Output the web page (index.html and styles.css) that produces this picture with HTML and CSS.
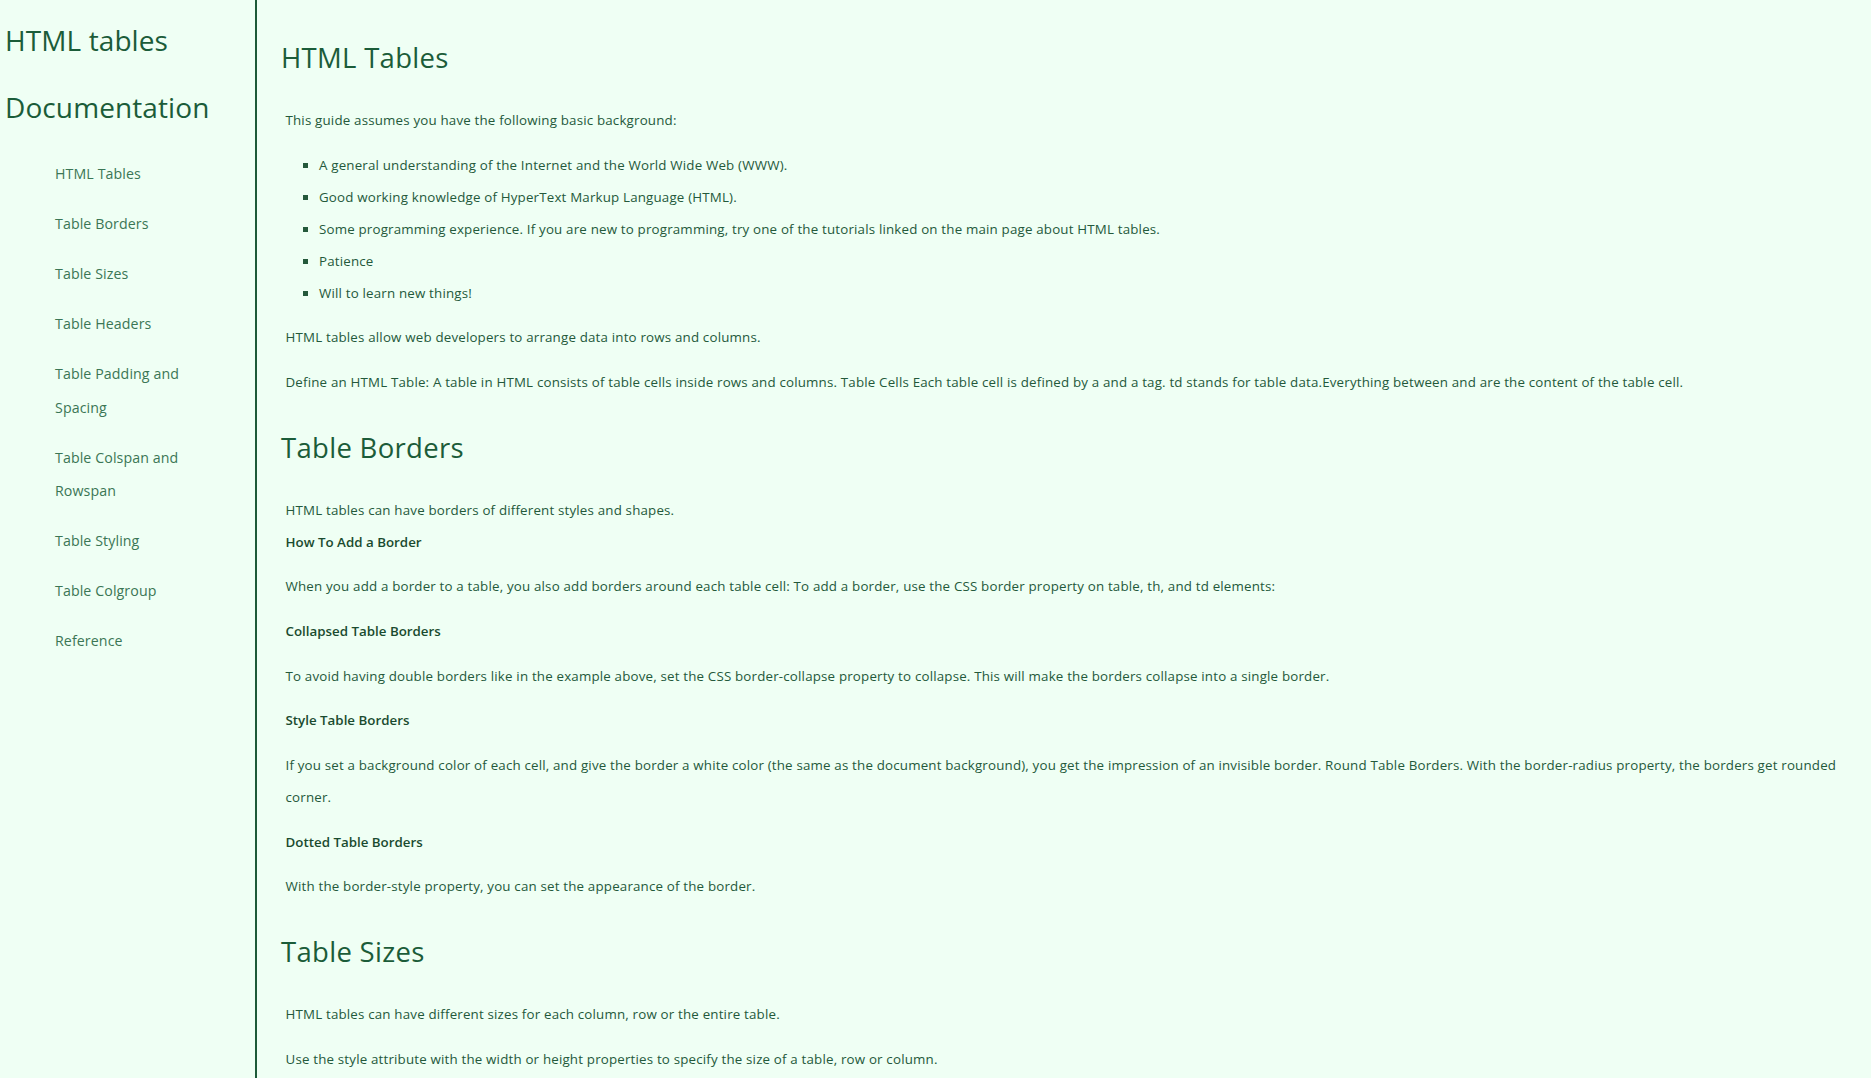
FILE: index.html
```html
<!DOCTYPE html>
<html lang="en">
<head>
<meta charset="utf-8">
<title>HTML tables Documentation</title>
<link rel="stylesheet" href="styles.css">
</head>
<body>
<nav class="sidebar" id="navbar">
  <header class="sidebar-title">HTML tables Documentation</header>
  <ul class="nav-list">
    <li><a class="nav-link" href="#HTML_Tables">HTML Tables</a></li>
    <li><a class="nav-link" href="#Table_Borders">Table Borders</a></li>
    <li><a class="nav-link" href="#Table_Sizes">Table Sizes</a></li>
    <li><a class="nav-link" href="#Table_Headers">Table Headers</a></li>
    <li><a class="nav-link" href="#Table_Padding_and_Spacing">Table Padding and Spacing</a></li>
    <li><a class="nav-link" href="#Table_Colspan_and_Rowspan">Table Colspan and Rowspan</a></li>
    <li><a class="nav-link" href="#Table_Styling">Table Styling</a></li>
    <li><a class="nav-link" href="#Table_Colgroup">Table Colgroup</a></li>
    <li><a class="nav-link" href="#Reference">Reference</a></li>
  </ul>
</nav>
<main class="content" id="main-doc">
  <section class="main-section" id="HTML_Tables">
    <header class="section-title">HTML Tables</header>
    <p class="text">This guide assumes you have the following basic background:</p>
    <ul class="bullets">
      <li>A general understanding of the Internet and the World Wide Web (WWW).</li>
      <li>Good working knowledge of HyperText Markup Language (HTML).</li>
      <li>Some programming experience. If you are new to programming, try one of the tutorials linked on the main page about HTML tables.</li>
      <li>Patience</li>
      <li>Will to learn new things!</li>
    </ul>
    <p class="text">HTML tables allow web developers to arrange data into rows and columns.</p>
    <p class="text">Define an HTML Table: A table in HTML consists of table cells inside rows and columns. Table Cells Each table cell is defined by a and a tag. td stands for table data.Everything between and are the content of the table cell.</p>
  </section>
  <section class="main-section" id="Table_Borders">
    <header class="section-title">Table Borders</header>
    <p class="text">HTML tables can have borders of different styles and shapes.<br><strong class="sub">How To Add a Border</strong></p>
    <p class="text">When you add a border to a table, you also add borders around each table cell: To add a border, use the CSS border property on table, th, and td elements:</p>
    <p class="text"><strong class="sub">Collapsed Table Borders</strong></p>
    <p class="text">To avoid having double borders like in the example above, set the CSS border-collapse property to collapse. This will make the borders collapse into a single border.</p>
    <p class="text"><strong class="sub">Style Table Borders</strong></p>
    <p class="text">If you set a background color of each cell, and give the border a white color (the same as the document background), you get the impression of an invisible border. Round Table Borders. With the border-radius property, the borders get rounded corner.</p>
    <p class="text"><strong class="sub">Dotted Table Borders</strong></p>
    <p class="text">With the border-style property, you can set the appearance of the border.</p>
  </section>
  <section class="main-section" id="Table_Sizes">
    <header class="section-title">Table Sizes</header>
    <p class="text">HTML tables can have different sizes for each column, row or the entire table.</p>
    <p class="text">Use the style attribute with the width or height properties to specify the size of a table, row or column.</p>
  </section>
</main>
</body>
</html>
```

FILE: styles.css
```css
html, body {
  margin: 0;
  padding: 0;
}

body {
  background: #effff4;
  color: #24593b;
  font-family: "Open Sans", "Liberation Sans", sans-serif;
  display: flex;
  align-items: flex-start;
}

.sidebar {
  width: 250px;
  flex-shrink: 0;
  min-height: 100vh;
  padding: 7.2px 0 0 5px;
  border-right: 2px solid #1c5a38;
  align-self: stretch;
}

.sidebar-title {
  font-size: 28px;
  line-height: 67px;
  color: #1b5c39;
  letter-spacing: 0.1px;
}

.nav-list {
  list-style: none;
  margin: 8px 0 0;
  padding: 0 30px 0 50px;
}

.nav-list li {
  padding: 8.2px 0;
  font-size: 14.2px;
  line-height: 33.6px;
  letter-spacing: 0.1px;
}

.nav-link {
  color: #3b7655;
  text-decoration: none;
}

.content {
  flex: 1;
  min-width: 0;
  padding: 8.2px 24px 0;
}

.section-title {
  font-size: 27.5px;
  line-height: 66px;
  margin: 17px 0 0;
  color: #1b5c39;
  letter-spacing: 0.3px;
}

.text {
  margin: 12.7px 0 12.7px 4.5px;
  font-size: 13.33px;
  line-height: 32px;
  letter-spacing: 0.18px;
}

.bullets {
  margin: 10px 0 12px 4.5px;
  padding-left: 33.5px;
  list-style: square;
  font-size: 13.33px;
  line-height: 32px;
  letter-spacing: 0.18px;
}

.sub {
  font-weight: 600;
  color: #1a4b2f;
  letter-spacing: 0;
}
```
